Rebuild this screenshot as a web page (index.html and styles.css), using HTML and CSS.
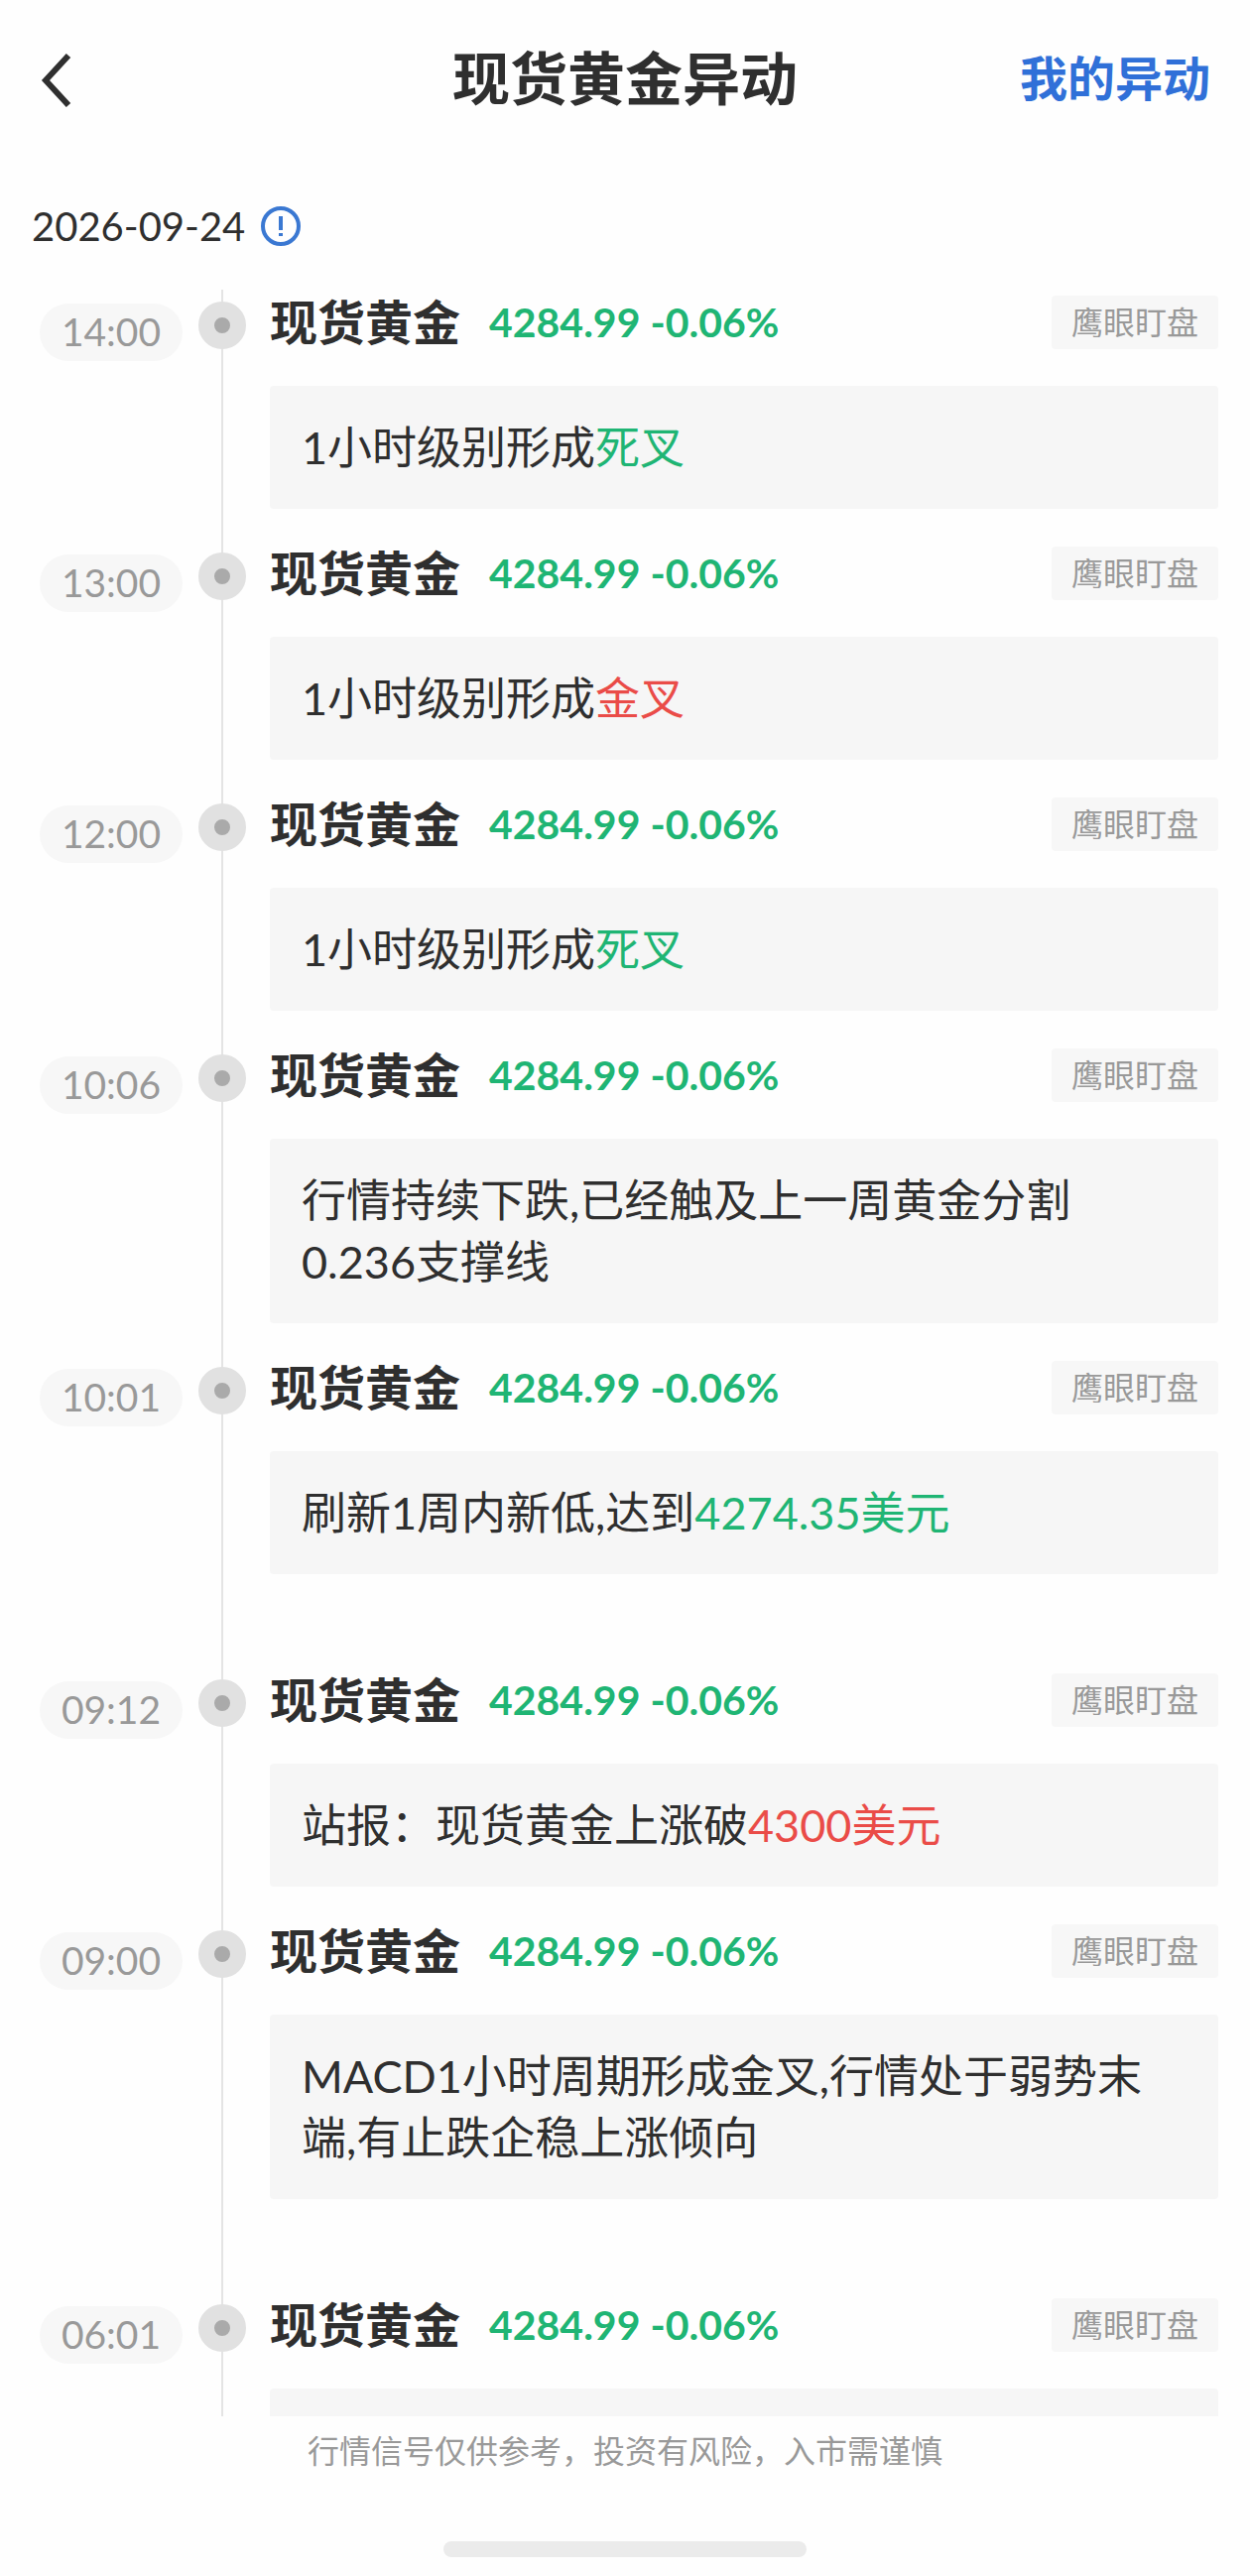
FILE: index.html
```html
<!DOCTYPE html>
<html lang="zh-CN">
<head>
    <meta charset="UTF-8">
    <meta name="viewport" content="width=device-width, initial-scale=1.0">
    <title>现货黄金异动</title>
    <link rel="stylesheet" href="styles.css">
</head>
<body>
    <header class="navbar">
        <button type="button" class="back-btn" aria-label="返回">
            <svg width="34" height="56" viewBox="0 0 34 56" fill="none" stroke="#2f2f2f" stroke-width="6">
                <path d="M29 4 L6 29 L29 54"/>
            </svg>
        </button>
        <h1 class="nav-title">现货黄金异动</h1>
        <a href="#" class="nav-link">我的异动</a>
    </header>

    <div class="date-row">
        <time datetime="2026-09-24">2026-09-24</time>
        <button type="button" class="info-btn" aria-label="说明">
            <svg width="40" height="40" viewBox="0 0 40 40" fill="none" stroke="#3a78d2">
                <circle cx="20" cy="20" r="18" stroke-width="4"/>
                <path d="M20 10 V24" stroke-width="4"/>
                <path d="M20 27 V30" stroke-width="4"/>
            </svg>
        </button>
    </div>

    <main class="timeline">
        <article class="event">
            <time class="event-time">14:00</time>
            <div class="rail"><span class="dot"></span></div>
            <div class="event-body">
                <div class="event-head">
                    <h2 class="name">现货黄金</h2>
                    <span class="price">4284.99 -0.06%</span>
                    <span class="tag">鹰眼盯盘</span>
                </div>
                <p class="card">1小时级别形成<span class="down">死叉</span></p>
            </div>
        </article>

        <article class="event">
            <time class="event-time">13:00</time>
            <div class="rail"><span class="dot"></span></div>
            <div class="event-body">
                <div class="event-head">
                    <h2 class="name">现货黄金</h2>
                    <span class="price">4284.99 -0.06%</span>
                    <span class="tag">鹰眼盯盘</span>
                </div>
                <p class="card">1小时级别形成<span class="up">金叉</span></p>
            </div>
        </article>

        <article class="event">
            <time class="event-time">12:00</time>
            <div class="rail"><span class="dot"></span></div>
            <div class="event-body">
                <div class="event-head">
                    <h2 class="name">现货黄金</h2>
                    <span class="price">4284.99 -0.06%</span>
                    <span class="tag">鹰眼盯盘</span>
                </div>
                <p class="card">1小时级别形成<span class="down">死叉</span></p>
            </div>
        </article>

        <article class="event">
            <time class="event-time">10:06</time>
            <div class="rail"><span class="dot"></span></div>
            <div class="event-body">
                <div class="event-head">
                    <h2 class="name">现货黄金</h2>
                    <span class="price">4284.99 -0.06%</span>
                    <span class="tag">鹰眼盯盘</span>
                </div>
                <p class="card">行情持续下跌,已经触及上一周黄金分割0.236支撑线</p>
            </div>
        </article>

        <article class="event event-loose">
            <time class="event-time">10:01</time>
            <div class="rail"><span class="dot"></span></div>
            <div class="event-body">
                <div class="event-head">
                    <h2 class="name">现货黄金</h2>
                    <span class="price">4284.99 -0.06%</span>
                    <span class="tag">鹰眼盯盘</span>
                </div>
                <p class="card">刷新1周内新低,达到<span class="down">4274.35美元</span></p>
            </div>
        </article>

        <article class="event">
            <time class="event-time">09:12</time>
            <div class="rail"><span class="dot"></span></div>
            <div class="event-body">
                <div class="event-head">
                    <h2 class="name">现货黄金</h2>
                    <span class="price">4284.99 -0.06%</span>
                    <span class="tag">鹰眼盯盘</span>
                </div>
                <p class="card">站报：现货黄金上涨破<span class="up">4300美元</span></p>
            </div>
        </article>

        <article class="event event-loose">
            <time class="event-time">09:00</time>
            <div class="rail"><span class="dot"></span></div>
            <div class="event-body">
                <div class="event-head">
                    <h2 class="name">现货黄金</h2>
                    <span class="price">4284.99 -0.06%</span>
                    <span class="tag">鹰眼盯盘</span>
                </div>
                <p class="card">MACD1小时周期形成金叉,行情处于弱势末端,有止跌企稳上涨倾向</p>
            </div>
        </article>

        <article class="event">
            <time class="event-time">06:01</time>
            <div class="rail"><span class="dot"></span></div>
            <div class="event-body">
                <div class="event-head">
                    <h2 class="name">现货黄金</h2>
                    <span class="price">4284.99 -0.06%</span>
                    <span class="tag">鹰眼盯盘</span>
                </div>
                <p class="card"></p>
            </div>
        </article>
    </main>

    <footer class="footer">
        <p>行情信号仅供参考，投资有风险，入市需谨慎</p>
        <div class="home-bar"></div>
    </footer>
</body>
</html>
```

FILE: styles.css
```css
* {
    margin: 0;
    padding: 0;
    box-sizing: border-box;
}

body {
    font-family: Lato, 'Noto Sans CJK SC', sans-serif;
    background: #fefefe;
    color: #2f2f2f;
    height: 100vh;
    display: flex;
    flex-direction: column;
}

button {
    border: none;
    background: none;
    cursor: pointer;
}

svg {
    display: block;
}

/* top bar */
.navbar {
    display: grid;
    grid-template-columns: 1fr auto 1fr;
    align-items: center;
    height: 160px;
    padding: 0 40px;
}

.back-btn {
    justify-self: start;
}

.nav-title,
.nav-link {
    padding-bottom: 8px;
    font-weight: 700;
}

.nav-title {
    font-size: 58px;
}

.nav-link {
    justify-self: end;
    font-size: 48px;
    color: #3070d8;
    text-decoration: none;
}

.date-row {
    display: flex;
    align-items: center;
    gap: 16px;
    padding: 36px 32px 32px;
    font-size: 40px;
    line-height: 64px;
}

/* scrolling list */
.timeline {
    flex: 1;
    min-height: 0;
    overflow-y: auto;
    scrollbar-width: none;
}

.event {
    display: grid;
    grid-template-columns: 144px 48px minmax(0, 1fr);
    padding: 0 32px 0 40px;
    column-gap: 16px;
}

.event-time {
    margin-top: 14px;
    height: 58px;
    border-radius: 29px;
    background: #f7f7f7;
    color: #999;
    font-size: 39px;
    line-height: 56px;
    text-align: center;
}

.rail {
    padding-top: 12px;
    background: linear-gradient(#e4e4e4, #e4e4e4) center / 2px 100% no-repeat;
}

.dot {
    display: block;
    width: 48px;
    height: 48px;
    border: 16px solid #e1e1e1;
    border-radius: 50%;
    background: #aaa;
}

.event-body {
    padding: 0 0 32px 8px;
}

.event-loose .event-body {
    padding-bottom: 94px;
}

.event-head {
    display: flex;
    align-items: center;
    height: 65px;
    margin-bottom: 32px;
}

.name {
    font-size: 48px;
    font-weight: 700;
    line-height: 65px;
}

.price {
    margin-left: 29px;
    font-size: 41px;
    font-weight: 700;
    color: #1fb574;
}

.tag {
    margin-left: auto;
    padding: 0 20px;
    border-radius: 4px;
    background: #f7f7f7;
    color: #999;
    font-size: 32px;
    line-height: 54px;
}

.card {
    min-height: 124px;
    padding: 31px 48px 31px 32px;
    border-radius: 4px;
    background: #f6f6f6;
    font-size: 45px;
    line-height: 62px;
}

.down {
    color: #1fb574;
}

.up {
    color: #ea4c48;
}

.footer {
    padding: 10px 0 19px;
    color: #999;
    font-size: 32px;
    line-height: 50px;
    text-align: center;
}

.home-bar {
    width: 29%;
    height: 16px;
    margin: 66px auto 0;
    border-radius: 8px;
    background: #ebebeb;
}
```
